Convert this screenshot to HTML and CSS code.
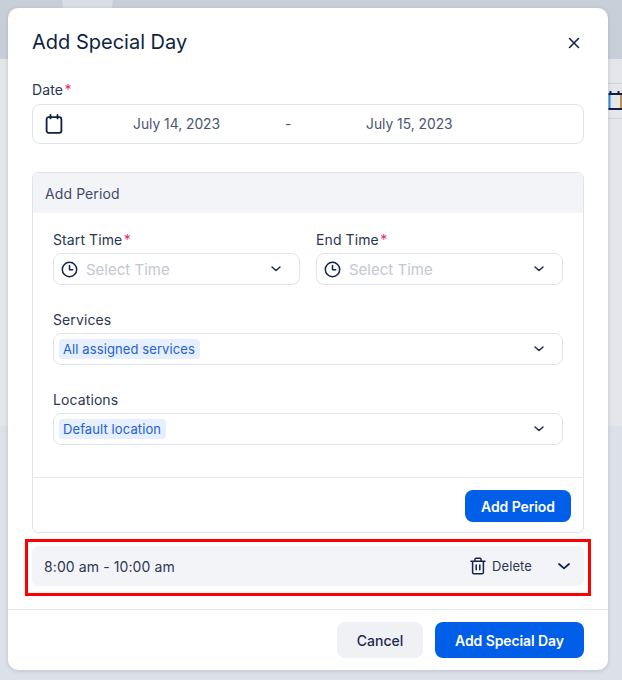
FILE: index.html
```html
<!DOCTYPE html>
<html lang="en">
<head>
<meta charset="utf-8">
<title>Add Special Day</title>
<link rel="stylesheet" href="styles.css">
</head>
<body>
<div class="backdrop">
  <div class="bg-circle"></div>
  <div class="bg-tool">
    <svg width="14" height="20" viewBox="0 0 14 20" fill="none" stroke-width="2"><path d="M1.5 3v15" stroke="#2f8fe0"/><path d="M13 3v15" stroke="#c98a52"/><path d="M0.5 3h13.5M0.5 18h13.5M2.5 0v4M10.5 0v4" stroke="#0f1f44"/></svg>
  </div>
</div>
<main class="modal">
  <header class="modal-head">
    <h1 class="title">Add Special Day</h1>
    <button class="close" aria-label="Close">
      <svg width="12" height="12" viewBox="0 0 12 12" fill="none" stroke="#15234a" stroke-width="1.6" stroke-linecap="round"><path d="M1.5 1.5l9 9M10.5 1.5l-9 9"/></svg>
    </button>
  </header>
  <div class="modal-body">
    <div class="field">
      <label class="label">Date<span class="req">*</span></label>
      <div class="date-input">
        <svg class="cal" width="18" height="20" viewBox="0 0 18 20" fill="none" stroke="#0f1f44" stroke-width="1.8" stroke-linecap="round" stroke-linejoin="round"><rect x="1.6" y="3.2" width="14.8" height="15.6" rx="2"/><path d="M5.5 1v3.4M12.5 1v3.4"/></svg>
        <span class="date-a">July 14, 2023</span>
        <span class="date-sep">-</span>
        <span class="date-b">July 15, 2023</span>
      </div>
    </div>
    <section class="period">
      <div class="period-head">Add Period</div>
      <div class="period-body">
        <div class="two">
          <div class="field">
            <label class="label">Start Time<span class="req">*</span></label>
            <div class="select">
              <svg class="clock" width="17" height="17" viewBox="0 0 17 17" fill="none" stroke="#15234a" stroke-width="1.5" stroke-linecap="round" stroke-linejoin="round"><circle cx="8.5" cy="8.5" r="7.2"/><path d="M8.5 4.5v4.2h3.2"/></svg>
              <span class="placeholder">Select Time</span>
              <svg class="chev" width="10" height="6" viewBox="0 0 10 6" fill="none" stroke="#15234a" stroke-width="1.4" stroke-linecap="round" stroke-linejoin="round"><path d="M1 1l4 3.6L9 1"/></svg>
            </div>
          </div>
          <div class="field">
            <label class="label">End Time<span class="req">*</span></label>
            <div class="select">
              <svg class="clock" width="17" height="17" viewBox="0 0 17 17" fill="none" stroke="#15234a" stroke-width="1.5" stroke-linecap="round" stroke-linejoin="round"><circle cx="8.5" cy="8.5" r="7.2"/><path d="M8.5 4.5v4.2h3.2"/></svg>
              <span class="placeholder">Select Time</span>
              <svg class="chev" width="10" height="6" viewBox="0 0 10 6" fill="none" stroke="#15234a" stroke-width="1.4" stroke-linecap="round" stroke-linejoin="round"><path d="M1 1l4 3.6L9 1"/></svg>
            </div>
          </div>
        </div>
        <div class="field">
          <label class="label">Services</label>
          <div class="select tagged">
            <span class="tag">All assigned services</span>
            <svg class="chev" width="10" height="6" viewBox="0 0 10 6" fill="none" stroke="#15234a" stroke-width="1.4" stroke-linecap="round" stroke-linejoin="round"><path d="M1 1l4 3.6L9 1"/></svg>
          </div>
        </div>
        <div class="field">
          <label class="label">Locations</label>
          <div class="select tagged">
            <span class="tag">Default location</span>
            <svg class="chev" width="10" height="6" viewBox="0 0 10 6" fill="none" stroke="#15234a" stroke-width="1.4" stroke-linecap="round" stroke-linejoin="round"><path d="M1 1l4 3.6L9 1"/></svg>
          </div>
        </div>
      </div>
      <div class="period-foot">
        <button class="btn primary small">Add Period</button>
      </div>
    </section>
    <div class="row">
      <span class="row-time">8:00 am - 10:00 am</span>
      <span class="row-delete">
        <svg width="16" height="18" viewBox="0 0 16 18" fill="none" stroke="#15234a" stroke-width="1.5" stroke-linecap="round" stroke-linejoin="round"><path d="M1 4.2h14M5 4V2.2a1 1 0 0 1 1-1h4a1 1 0 0 1 1 1V4M2.6 4.2v11.2a1.4 1.4 0 0 0 1.4 1.4h8a1.4 1.4 0 0 0 1.4-1.4V4.2M6.2 8v4.8M9.8 8v4.8"/></svg>
        Delete
      </span>
      <svg class="row-chev" width="12" height="7" viewBox="0 0 12 7" fill="none" stroke="#0f1f44" stroke-width="1.7" stroke-linecap="round" stroke-linejoin="round"><path d="M1 1l5 4.4L11 1"/></svg>
      <div class="highlight"></div>
    </div>
  </div>
  <footer class="modal-foot">
    <button class="btn secondary">Cancel</button>
    <button class="btn primary">Add Special Day</button>
  </footer>
</main>
</body>
</html>
```

FILE: styles.css
```css
* { box-sizing: border-box; }
html, body { margin: 0; height: 100%; }
body {
  width: 622px;
  height: 680px;
  overflow: hidden;
  position: relative;
  font-family: Inter, "Liberation Sans", sans-serif;
  color: #2b3654;
  background: #dce0e8;
  padding: 8px 14px 0 8px;
}
.backdrop {
  position: absolute;
  left: 0; right: 0; top: 0;
  height: 426px;
  background: linear-gradient(#c9cfd9 0 59px, #e4e6ea 59px);
  overflow: hidden;
}
.bg-circle {
  position: absolute;
  left: 62px; top: -26px;
  width: 51px; height: 51px;
  border-radius: 50%;
  background: #d9dde5;
}
.bg-tool {
  position: absolute;
  left: 608px; top: 83px;
  width: 14px; height: 36px;
  padding-top: 7px;
  border-top: 1px solid #cfd2d8;
  border-bottom: 1px solid #cfd2d8;
  overflow: hidden;
}
.bg-tool svg { display: block; }
.modal {
  position: relative;
  width: 600px;
  height: 662px;
  background: #fff;
  border-radius: 10px;
  box-shadow: 0 1px 4px rgba(40, 50, 80, .18);
  display: flex;
  flex-direction: column;
}
.modal-head {
  display: flex;
  align-items: center;
  justify-content: space-between;
  padding: 0 24px;
  height: 67px;
}
.title {
  margin: 0;
  font-size: 20px;
  line-height: 26px;
  font-weight: 400;
  color: #0f1f44;
}
.close {
  display: flex;
  padding: 0;
  border: 0;
  background: none;
  margin-right: 4px;
  margin-top: 2px;
}
.modal-body {
  flex: 1;
  padding: 5px 24px 0;
}
.field { display: flex; flex-direction: column; }
.label {
  font-size: 14px;
  line-height: 20px;
  letter-spacing: .1px;
  color: #2b3654;
  margin-bottom: 4px;
}
.period-body .label { padding-top: 1px; height: 20px; }
.req { color: #f0266f; margin-left: 1.5px; }
.date-input {
  height: 40px;
  border: 1px solid #e1e3ea;
  border-radius: 8px;
  display: flex;
  align-items: center;
  font-size: 13.8px;
  color: #4a5470;
  position: relative;
  padding-left: 12px;
}
.cal { flex: none; margin-top: -1px; }
.date-a { margin-left: 70px; width: 152px; }
.date-sep { width: 81px; }
.period {
  margin-top: 28px;
  height: 361px;
  border: 1px solid #e1e3ea;
  border-radius: 6px;
  display: flex;
  flex-direction: column;
  overflow: hidden;
}
.period-head {
  height: 40px;
  flex: none;
  background: #f3f4f8;
  padding-left: 12px;
  display: flex;
  align-items: center;
  font-size: 14px;
  letter-spacing: .1px;
  color: #3f4a66;
}
.period-body {
  flex: 1;
  padding: 16px 20px 0;
  display: flex;
  flex-direction: column;
  gap: 24px;
}
.two {
  display: grid;
  grid-template-columns: 247px 247px;
  gap: 16px;
}
.select {
  height: 32px;
  border: 1px solid #e1e3ea;
  border-radius: 8px;
  display: flex;
  align-items: center;
  padding: 0 18px 0 7px;
}
.clock { flex: none; }
.placeholder {
  margin-left: 8px;
  flex: 1;
  font-size: 15px;
  color: #c3c7d3;
}
.chev { flex: none; margin-left: auto; }
.tagged { padding-left: 5px; }
.tag {
  height: 20px;
  padding: 1px 5px 0 4px;
  border-radius: 4px;
  background: #e6effd;
  color: #1f5fd6;
  font-size: 13px;
  letter-spacing: .1px;
  line-height: 19px;
}
.period-foot {
  flex: none;
  height: 55px;
  padding-top: 2px;
  border-top: 1px solid #e6e7ec;
  display: flex;
  align-items: center;
  justify-content: flex-end;
  padding-right: 12px;
}
.btn {
  font-family: inherit;
  border: 0;
  border-radius: 8px;
  font-size: 14px;
  font-weight: 600;
  letter-spacing: -.1px;
  height: 36px;
  padding: 0;
}
.primary { background: #005ee9; color: #fff; width: 149px; }
.small { width: 106px; height: 32px; }
.secondary { background: #f0f1f5; color: #1c2a4e; font-weight: 500; letter-spacing: 0; width: 86px; }
.row {
  position: relative;
  margin-top: 13px;
  height: 40px;
  background: #f3f4f8;
  border-radius: 6px;
  display: flex;
  align-items: center;
  padding: 0 14px 0 12px;
}
.row-time {
  flex: 1;
  font-size: 14px;
  letter-spacing: .1px;
  color: #2b3654;
}
.row-delete {
  display: flex;
  align-items: center;
  gap: 6px;
  font-size: 13px;
  letter-spacing: .1px;
  color: #2b3654;
  margin-right: 26px;
}
.row-chev { flex: none; }
.highlight {
  position: absolute;
  left: -7px; right: -7px; top: -7px; bottom: -10px;
  border: 3px solid #ff0000;
  pointer-events: none;
}
.modal-foot {
  flex: none;
  height: 61px;
  border-top: 1px solid #e6e7ec;
  display: flex;
  justify-content: flex-end;
  gap: 12px;
  padding: 12px 24px 0;
}
```
